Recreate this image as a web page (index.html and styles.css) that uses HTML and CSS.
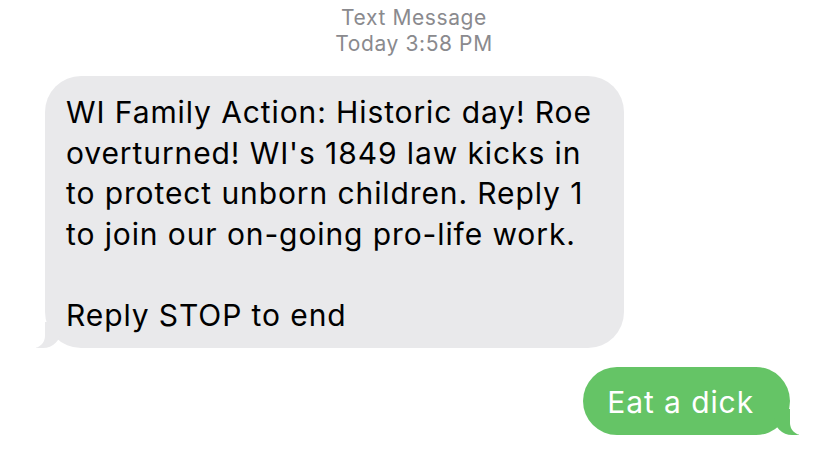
FILE: index.html
```html
<!DOCTYPE html>
<html>
<head>
<meta charset="utf-8">
<link rel="stylesheet" href="styles.css">
</head>
<body>
<div class="thread">
  <div class="meta">
    <div>Text Message</div>
    <div>Today 3:58 PM</div>
  </div>
  <div class="row in">
    <div class="bubble recv">WI Family Action: Historic day! Roe overturned! WI's 1849 law kicks in to protect unborn children. Reply 1 to join our on-going pro-life work.<br><br>Reply STOP to end</div>
  </div>
  <div class="row out">
    <div class="bubble sent">Eat a dick</div>
  </div>
</div>
</body>
</html>
```
FILE: styles.css
```css
html, body {
  margin: 0;
  padding: 0;
  background: #fff;
}
.thread {
  width: 828px;
  height: 453px;
  font-family: Inter, "Noto Sans", sans-serif;
  overflow: hidden;
}
.meta {
  padding-top: 5px;
  text-align: center;
  color: #8a8a8e;
  font-size: 21px;
  line-height: 26px;
  letter-spacing: 0.6px;
}
.row {
  display: flex;
}
.row.in {
  padding-left: 45px;
  margin-top: 19px;
}
.row.out {
  justify-content: flex-end;
  padding-right: 38px;
  margin-top: 19px;
}
.bubble {
  position: relative;
  font-size: 30px;
  line-height: 40.5px;
  letter-spacing: 0.9px;
  border-radius: 36px;
}
.recv {
  width: 537px;
  padding: 16px 21px 13px 21px;
  background: #e9e9eb;
  color: #000;
}
.sent {
  padding: 15px 36px 12.5px 24px;
  background: #65c466;
  color: #fff;
}
.bubble::before,
.bubble::after {
  content: "";
  position: absolute;
  bottom: 0;
  height: 26px;
}
.recv::before {
  left: -9px;
  width: 25px;
  background: #e9e9eb;
  border-bottom-right-radius: 18px;
}
.recv::after {
  left: -26px;
  width: 26px;
  background: #fff;
  border-bottom-right-radius: 12px;
}
.sent::before {
  right: -9px;
  width: 25px;
  background: #65c466;
  border-bottom-left-radius: 18px;
}
.sent::after {
  right: -26px;
  width: 26px;
  background: #fff;
  border-bottom-left-radius: 12px;
}
```
